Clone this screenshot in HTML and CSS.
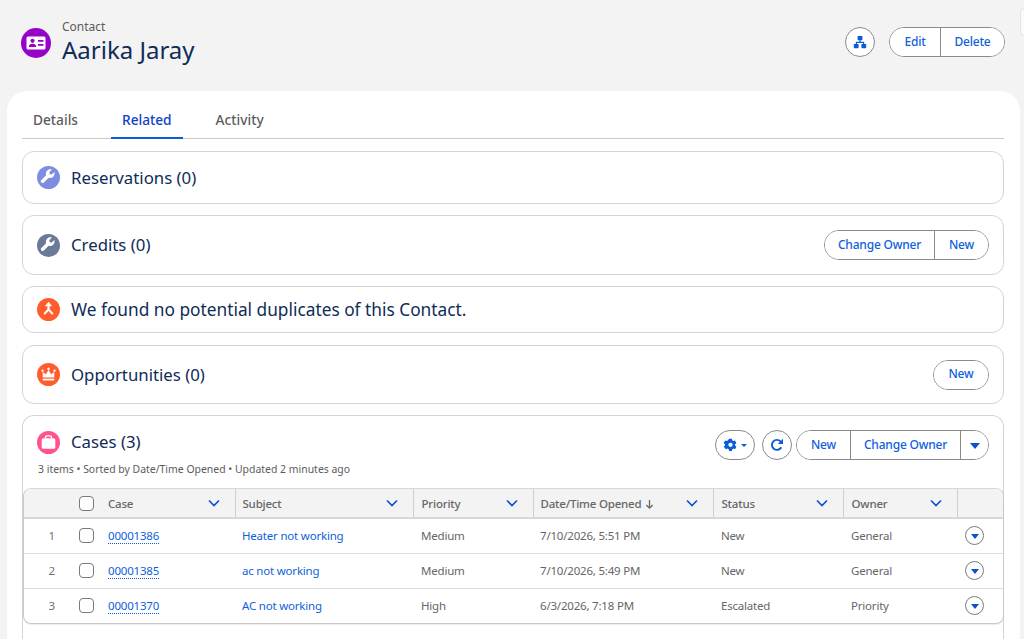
FILE: index.html
```html
<!DOCTYPE html>
<html lang="en">
<head>
    <meta charset="UTF-8">
    <meta name="viewport" content="width=device-width, initial-scale=1.0">
    <title>Aarika Jaray | Contact</title>
    <link rel="stylesheet" href="styles.css">
</head>
<body>
    <div class="edge-tab"></div>

    <header class="page-header">
        <div class="record-title">
            <span class="icon icon-lg icon-contact">
                <svg viewBox="0 0 30 30" width="30" height="30"><rect x="5.500" y="8.500" width="19" height="13" rx="1.500" fill="#fff"/><circle cx="11.500" cy="12.800" r="2.100" fill="#9602c7"/><path d="M7.800 19c0-2.300 1.500-3.200 3.700-3.200s3.700.9 3.700 3.200z" fill="#9602c7"/><rect x="17" y="12" width="5.500" height="1.800" fill="#9602c7"/><rect x="17" y="16" width="5.500" height="1.800" fill="#9602c7"/></svg>
            </span>
            <div>
                <div class="record-type">Contact</div>
                <h1>Aarika Jaray</h1>
            </div>
        </div>
        <div class="actions">
            <button class="btn-round">
                <svg viewBox="0 0 16 16" width="16" height="16" fill="#0b5cd8"><rect x="5.600" y="2" width="4.800" height="4.200" rx=".6"/><rect x="1.800" y="10" width="4.800" height="4.200" rx=".6"/><rect x="9.400" y="10" width="4.800" height="4.200" rx=".6"/><path d="M7.400 5.500h1.200v2.300h3.600V11H11V9H5v2H3.800V7.800h3.600z"/></svg>
            </button>
            <div class="btn-group group-header">
                <button>Edit</button>
                <button>Delete</button>
            </div>
        </div>
    </header>

    <main class="panel">
        <nav class="tabs">
            <a class="tab">Details</a>
            <a class="tab active">Related</a>
            <a class="tab">Activity</a>
        </nav>

        <section class="card card-reservations">
            <div class="card-title">
                <span class="icon icon-wrench-a">
                    <svg viewBox="0 0 22 22" width="23" height="23"><path d="M16.600 5.700l-2.500 2.500-1.900-.4-.4-1.900 2.500-2.500c-1.600-.5-3.400-.1-4.600 1.100-1.200 1.200-1.500 2.900-1 4.400l-4.500 4.500c-.7.700-.7 1.700 0 2.400.7.700 1.700.7 2.400 0l4.500-4.500c1.500.5 3.200.2 4.400-1 1.200-1.200 1.600-3 1.100-4.600z" fill="#fff"/></svg>
                </span>
                <h2>Reservations (0)</h2>
            </div>
        </section>

        <section class="card card-credits">
            <div class="card-title">
                <span class="icon icon-wrench-b">
                    <svg viewBox="0 0 22 22" width="23" height="23"><path d="M16.600 5.700l-2.500 2.500-1.900-.4-.4-1.900 2.500-2.500c-1.600-.5-3.400-.1-4.600 1.100-1.200 1.200-1.500 2.900-1 4.400l-4.500 4.500c-.7.700-.7 1.700 0 2.400.7.700 1.700.7 2.400 0l4.500-4.500c1.500.5 3.200.2 4.400-1 1.200-1.200 1.600-3 1.100-4.600z" fill="#fff"/></svg>
                </span>
                <h2>Credits (0)</h2>
            </div>
            <div class="btn-group">
                <button class="btn-owner">Change Owner</button>
                <button class="btn-new">New</button>
            </div>
        </section>

        <section class="card card-duplicates">
            <div class="card-title">
                <span class="icon icon-orange">
                    <svg viewBox="0 0 22 22" width="23" height="23" fill="#fff"><path d="M11 3.500l3.500 4.300h-2.500v2.700l3.800 4.300-1.400 1.300-3.400-3.700-3.400 3.700-1.400-1.300 3.800-4.300V7.800H7.500z"/></svg>
                </span>
                <h2 class="wide-text">We found no potential duplicates of this Contact.</h2>
            </div>
        </section>

        <section class="card card-opportunities">
            <div class="card-title">
                <span class="icon icon-orange">
                    <svg viewBox="0 0 22 22" width="23" height="23" fill="#fff"><path d="M5.500 13.800V8.600l3 2.200L11 6.800l2.500 4 3-2.200v5.200z"/><circle cx="5.300" cy="7.400" r="1.100"/><circle cx="16.700" cy="7.400" r="1.100"/><circle cx="11" cy="5.400" r="1.200"/><rect x="5.500" y="15" width="11" height="1.700"/></svg>
                </span>
                <h2>Opportunities (0)</h2>
            </div>
            <div class="btn-group">
                <button class="btn-new">New</button>
            </div>
        </section>

        <section class="card card-cases">
            <div class="cases-head">
                <div>
                    <div class="card-title">
                        <span class="icon icon-pink">
                            <svg viewBox="0 0 22 22" width="23" height="23"><path d="M8.200 7V5.600c0-.6.400-1 1-1h3.600c.6 0 1 .4 1 1V7" fill="none" stroke="#fff" stroke-width="1.300"/><rect x="4.500" y="7" width="13" height="10" rx="1.500" fill="#fff"/></svg>
                        </span>
                        <h2>Cases (3)</h2>
                    </div>
                    <p class="list-meta">3 items • Sorted by Date/Time Opened • Updated 2 minutes ago</p>
                </div>
                <div class="cases-actions">
                    <button class="btn-round btn-gear">
                        <svg viewBox="0 0 16 16" width="15" height="15" fill="#0b5cd8"><path fill-rule="evenodd" d="M6.500.8h3l.4 1.900 1.100.6 1.800-.6 1.500 2.600-1.400 1.300v1.400l1.400 1.300-1.500 2.600-1.800-.6-1.100.6-.4 1.900h-3l-.4-1.900-1.100-.6-1.800.6L.700 9.300l1.400-1.300V6.600L.700 5.300l1.500-2.600 1.800.6 1.100-.6zM8 5a2.300 2.300 0 1 0 0 4.600A2.300 2.300 0 0 0 8 5z"/></svg>
                        <span class="caret-sm"></span>
                    </button>
                    <button class="btn-round btn-refresh">
                        <svg viewBox="0 0 16 16" width="16" height="16" fill="none" stroke="#0b5cd8" stroke-width="1.900"><path d="M12.300 10.300A5 5 0 1 1 11.600 4.500"/><path d="M14 1.800v5.100H8.900z" fill="#0b5cd8" stroke="none"/></svg>
                    </button>
                    <div class="btn-group">
                        <button class="btn-new-lg">New</button>
                        <button class="btn-owner-lg">Change Owner</button>
                        <button class="btn-more"><span class="caret"></span></button>
                    </div>
                </div>
            </div>

            <div class="table-wrap">
                <table class="cases-table">
                    <colgroup>
                        <col class="col-num"><col class="col-check"><col class="col-case"><col class="col-subject"><col class="col-priority"><col class="col-date"><col class="col-status"><col class="col-owner"><col class="col-menu">
                    </colgroup>
                    <thead>
                        <tr>
                            <th></th>
                            <th><span class="check"></span></th>
                            <th><div class="th-in">Case <svg class="chev" viewBox="0 0 12 8" width="12" height="8"><path d="M1 1.500l5 5 5-5" /></svg></div></th>
                            <th><div class="th-in">Subject <svg class="chev" viewBox="0 0 12 8" width="12" height="8"><path d="M1 1.500l5 5 5-5" /></svg></div></th>
                            <th><div class="th-in">Priority <svg class="chev" viewBox="0 0 12 8" width="12" height="8"><path d="M1 1.500l5 5 5-5" /></svg></div></th>
                            <th><div class="th-in"><span>Date/Time Opened <svg class="sort-arrow" viewBox="0 0 10 12" width="9" height="11"><path d="M5 1v9M1.500 6.500L5 10l3.500-3.500" /></svg></span> <svg class="chev" viewBox="0 0 12 8" width="12" height="8"><path d="M1 1.500l5 5 5-5" /></svg></div></th>
                            <th><div class="th-in">Status <svg class="chev" viewBox="0 0 12 8" width="12" height="8"><path d="M1 1.500l5 5 5-5" /></svg></div></th>
                            <th><div class="th-in">Owner <svg class="chev" viewBox="0 0 12 8" width="12" height="8"><path d="M1 1.500l5 5 5-5" /></svg></div></th>
                            <th></th>
                        </tr>
                    </thead>
                    <tbody>
                        <tr>
                            <td class="num">1</td>
                            <td><span class="check"></span></td>
                            <td><a class="case-link">00001386</a></td>
                            <td><a class="subject-link">Heater not working</a></td>
                            <td>Medium</td>
                            <td>7/10/2026, 5:51 PM</td>
                            <td>New</td>
                            <td>General</td>
                            <td><span class="row-menu"><span class="caret"></span></span></td>
                        </tr>
                        <tr>
                            <td class="num">2</td>
                            <td><span class="check"></span></td>
                            <td><a class="case-link">00001385</a></td>
                            <td><a class="subject-link">ac not working</a></td>
                            <td>Medium</td>
                            <td>7/10/2026, 5:49 PM</td>
                            <td>New</td>
                            <td>General</td>
                            <td><span class="row-menu"><span class="caret"></span></span></td>
                        </tr>
                        <tr>
                            <td class="num">3</td>
                            <td><span class="check"></span></td>
                            <td><a class="case-link">00001370</a></td>
                            <td><a class="subject-link">AC not working</a></td>
                            <td>High</td>
                            <td>6/3/2026, 7:18 PM</td>
                            <td>Escalated</td>
                            <td>Priority</td>
                            <td><span class="row-menu"><span class="caret"></span></span></td>
                        </tr>
                    </tbody>
                </table>
            </div>
        </section>
    </main>
</body>
</html>
```

FILE: styles.css
```css
* {
    margin: 0;
    padding: 0;
    box-sizing: border-box;
}

html, body {
    height: 639px;
    overflow: hidden;
}

body {
    background: #f3f3f3;
    font-family: "Noto Sans", "Open Sans", sans-serif;
    color: #181818;
    position: relative;
}

button {
    font-family: inherit;
    background: #fff;
    cursor: pointer;
}

.edge-tab {
    position: absolute;
    top: 8px;
    right: -8px;
    width: 12px;
    height: 28px;
    background: #fafafa;
    border: 1px solid #e5e5e5;
    border-radius: 4px;
}

.page-header {
    height: 91px;
    padding: 19px 19px 0 21px;
    display: flex;
    justify-content: space-between;
    align-items: flex-start;
}

.record-title {
    display: flex;
    gap: 11px;
    align-items: flex-start;
}

.record-type {
    font-size: 12px;
    line-height: 16px;
    color: #5c5c5c;
}

h1 {
    font-size: 24px;
    line-height: 30px;
    font-weight: 400;
    color: #0f2c57;
}

.icon {
    width: 23px;
    height: 23px;
    border-radius: 50%;
    display: flex;
    align-items: center;
    justify-content: center;
    flex-shrink: 0;
}

.icon-lg {
    width: 30px;
    height: 30px;
    margin-top: 9px;
}

.icon-contact { background: #9602c7; }
.icon-wrench-a { background: #7f8de1; }
.icon-wrench-b { background: #6b7a99; }
.icon-orange { background: #ff5d2d; }
.icon-pink { background: #ff538a; }

.actions {
    display: flex;
    gap: 14px;
    margin-top: 8px;
}

.btn-round {
    width: 30px;
    height: 30px;
    border: 1px solid #8a8a8a;
    border-radius: 15px;
    display: flex;
    align-items: center;
    justify-content: center;
}

.btn-group {
    display: flex;
    height: 30px;
    border: 1px solid #8a8a8a;
    border-radius: 15px;
    overflow: hidden;
    background: #fff;
}

.btn-group button {
    border: none;
    border-left: 1px solid #8a8a8a;
    padding-bottom: 2px;
    font-size: 12px;
    font-weight: 500;
    color: #0f5fdc;
    letter-spacing: -0.2px;
}

.btn-group button:first-child {
    border-left: none;
}

.group-header button:first-child { width: 50px; }
.group-header button:last-child { width: 64px; }

.btn-owner { width: 109px; }
.btn-new { width: 54px; }
.btn-new-lg { width: 53px; }
.btn-owner-lg { width: 110px; }
.btn-more { width: 28px; }

.panel {
    margin: 0 4px 0 7px;
    height: 548px;
    background: #fff;
    border-radius: 20px 20px 0 0;
    padding: 10px 16px 0 15px;
    overflow: hidden;
}

.tabs {
    display: flex;
    height: 38px;
    border-bottom: 1px solid #c9c9c9;
    margin-bottom: 12px;
}

.tab {
    font-size: 13.700px;
    font-weight: 500;
    color: #5c5c5c;
    padding: 9px 11px 0;
    margin-right: 22px;
    margin-bottom: -1px;
}

.tab.active {
    color: #0b43c9;
    border-bottom: 2px solid #0b5cd8;
}

.card {
    border: 1px solid #d4d4d4;
    border-radius: 12px;
    display: flex;
    align-items: center;
    justify-content: space-between;
    padding: 0 14px;
    margin-bottom: 11px;
}

.card-reservations { height: 53px; }
.card-credits { height: 60px; }
.card-duplicates { height: 47px; margin-bottom: 12px; }
.card-opportunities { height: 59px; }

.card-title {
    display: flex;
    align-items: center;
    gap: 11px;
}

h2 {
    font-size: 16.800px;
    line-height: 24px;
    font-weight: 400;
    color: #0f2c57;
}

h2.wide-text {
    font-size: 17.300px;
}

.card-cases {
    display: block;
    height: 224px;
    padding: 0;
    margin-bottom: 0;
    border-bottom: none;
    border-radius: 12px 12px 0 0;
}

.cases-head {
    display: flex;
    justify-content: space-between;
    align-items: flex-start;
    padding: 14px 14px 0;
    height: 72px;
}

.list-meta {
    font-size: 10.450px;
    line-height: 14px;
    color: #5c5c5c;
    margin: 8px 0 0 1px;
}

.cases-actions {
    display: flex;
    gap: 4px;
}

.btn-gear {
    width: 40px;
    gap: 3px;
    margin-right: 3px;
}

.caret {
    display: inline-block;
    width: 0;
    height: 0;
    border-left: 5px solid transparent;
    border-right: 5px solid transparent;
    border-top: 6px solid #0b50cf;
}

.caret-sm {
    width: 0;
    height: 0;
    border-left: 3px solid transparent;
    border-right: 3px solid transparent;
    border-top: 3px solid #0b5cd8;
}

.table-wrap {
    border: 1px solid #c9c9c9;
    border-top: 1px solid #d8d8d8;
    border-radius: 8px;
    overflow: hidden;
    width: 981px;
    box-shadow: 0 1px 1px rgba(0, 0, 0, 0.08);
}

.cases-table {
    width: 100%;
    border-collapse: collapse;
    table-layout: fixed;
    font-size: 11.500px;
    letter-spacing: -0.2px;
    color: #666;
}

.col-num { width: 55px; }
.col-check { width: 21px; }
.col-case { width: 135px; }
.col-subject { width: 178px; }
.col-priority { width: 120px; }
.col-date { width: 180px; }
.col-status { width: 130px; }
.col-owner { width: 114px; }

th {
    height: 29px;
    background: #f3f3f3;
    border-bottom: 2px solid #d8d8d8;
    border-left: 1px solid #cfcfcf;
    font-weight: 500;
    text-align: left;
    color: #666;
    padding: 0 8px;
}

th:nth-child(1), th:nth-child(2), th:nth-child(3) {
    border-left: none;
}

th:nth-child(1), th:nth-child(2) {
    padding: 0;
}

td:nth-child(2) {
    padding: 0;
}

th:nth-child(4), td:nth-child(4),
th:nth-child(6), td:nth-child(6) {
    padding-left: 7px;
}

.th-in {
    display: flex;
    justify-content: space-between;
    align-items: center;
    padding-right: 7px;
}

.sort-arrow {
    fill: none;
    stroke: #666;
    stroke-width: 1.400;
    vertical-align: -2px;
    margin-left: 1px;
}

.chev {
    fill: none;
    stroke: #0b50cf;
    stroke-width: 1.600;
    flex-shrink: 0;
}

td {
    height: 35px;
    padding: 0 8px;
    border-bottom: 1px solid #dcdcdc;
}

tbody tr:last-child td {
    border-bottom: none;
}

td.num {
    text-align: right;
    padding-right: 24px;
    color: #707070;
}

.check {
    display: block;
    width: 15px;
    height: 15px;
    border: 1px solid #7a7a7a;
    border-radius: 4px;
    background: #fff;
}

.case-link {
    color: #0f5fdc;
    border-bottom: 1px dotted #0f5fdc;
}

.subject-link {
    color: #0f5fdc;
}

.row-menu {
    width: 19px;
    height: 19px;
    border: 1px solid #7a7a7a;
    border-radius: 50%;
    display: flex;
    align-items: center;
    justify-content: center;
}

.row-menu .caret {
    border-left-width: 4px;
    border-right-width: 4px;
    border-top-width: 5px;
    margin-top: 1px;
}
```
